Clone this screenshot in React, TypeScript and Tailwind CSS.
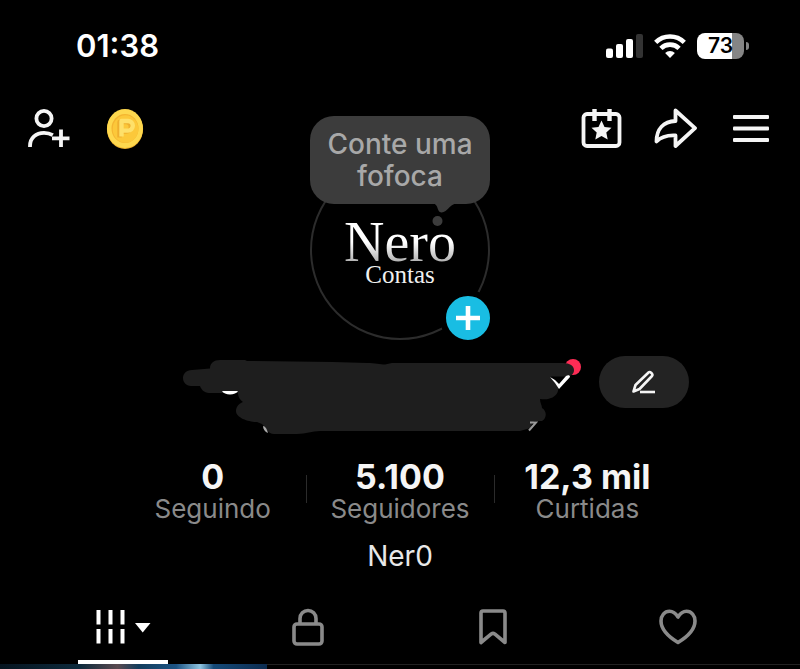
import type { ReactNode } from 'react';

const stats = [
  { value: '0', label: 'Seguindo' },
  { value: '5.100', label: 'Seguidores' },
  { value: '12,3 mil', label: 'Curtidas' },
];

function StatusBar() {
  return (
    <div className="flex items-center justify-between pt-7 pr-[51px] pl-[76px]">
      <span className="text-[31px] leading-9 font-semibold text-white">01:38</span>
      <div className="flex items-center gap-[11px]">
        <svg width="37" height="24" viewBox="0 0 37 24" fill="#fff">
          <rect x="0" y="14.5" width="7" height="9.5" rx="2" />
          <rect x="10" y="10" width="7" height="14" rx="2" />
          <rect x="20" y="5" width="7" height="19" rx="2" />
          <rect x="30" y="0" width="7" height="24" rx="2" fill="#333" />
        </svg>
        <svg width="32" height="24" viewBox="0 0 32 24" fill="none" stroke="#fff" strokeWidth="4.6">
          <path d="M1.7 8.3a20.5 20.5 0 0 1 28.6 0" />
          <path d="M6.9 14.3a13 13 0 0 1 18.2 0" />
          <path d="M16 24l-4.9-4.9a7 7 0 0 1 9.8 0z" fill="#fff" stroke="none" />
        </svg>
        <div className="flex items-center gap-0.5">
          <span className="flex h-[26px] w-[47px] items-center justify-center rounded-lg bg-linear-to-r from-white from-74% to-[#858585] to-74% text-[21px] leading-6 font-semibold text-black">
            73
          </span>
          <span className="h-2 w-[3px] rounded-r-full bg-[#858585]" />
        </div>
      </div>
    </div>
  );
}

function Coin() {
  return (
    <svg width="38" height="42" viewBox="0 0 38 42" fill="none">
      <ellipse cx="19" cy="21.5" rx="18" ry="19.5" fill="#efb02c" />
      <ellipse cx="19" cy="20.5" rx="18" ry="19.5" fill="#fed84e" />
      <ellipse cx="19" cy="20.5" rx="13.5" ry="14.5" fill="#f4b531" />
      <ellipse cx="19.5" cy="21" rx="12.8" ry="13.8" fill="#fcc83a" />
      <g strokeLinejoin="round" strokeWidth="4.4">
        <path d="M13.5 29.500V14h6.500a4.800 4.800 0 0 1 0 9.600h-6.500" stroke="#eeaf2e" />
        <path d="M15.500 28.500V13h6.500a4.800 4.800 0 0 1 0 9.600h-6.500" stroke="#fee06a" />
      </g>
    </svg>
  );
}

function Avatar() {
  return (
    <div className="relative h-56 w-[180px]">
      <div className="flex h-56 flex-col justify-end">
        <div className="flex h-[180px] flex-col items-center rounded-full border-2 border-[#2c2c2c] pt-14 font-['Liberation_Serif',serif]">
          <span className="bg-linear-to-b from-white from-50% to-[#b4b4b4] to-90% bg-clip-text text-[56px] leading-[48px] text-transparent">
            Nero
          </span>
          <span className="text-[25px] leading-[18px] text-[#f0f0f0]">Contas</span>
        </div>
      </div>
      <div className="absolute inset-x-0 top-0 rounded-[24px] bg-[#3c3c3c] px-3 py-3 text-center text-[28px] leading-8 font-medium text-[#a8a8a8]">
        Conte uma fofoca
      </div>
      <svg className="absolute top-[87px] left-[120px]" width="28" height="26" viewBox="0 0 28 26" fill="#3c3c3c">
        <path d="M2 0c5 1 5 4 6.5 7.5 1 2.5 4.5 2.5 7 .5C20 4.5 21 1.5 27 0z" />
        <circle cx="7.5" cy="18" r="5" />
      </svg>
      <button
        type="button"
        aria-label="Adicionar"
        className="absolute -right-1.5 -bottom-1.5 flex h-14 w-14 cursor-pointer items-center justify-center rounded-full border-[6px] border-black bg-[#19bde3]"
      >
        <svg width="24" height="24" viewBox="0 0 24 24" stroke="#fff" strokeWidth="4.6">
          <path d="M12 0v24M0 12h24" />
        </svg>
      </button>
    </div>
  );
}

function ProfileHeader() {
  return (
    <header className="grid grid-cols-[1fr_auto_1fr] items-start px-7 pt-[52px]">
      <div className="-mt-2 flex items-center gap-[35px]">
        <button type="button" aria-label="Adicionar amigos" className="cursor-pointer">
          <svg width="43" height="40" viewBox="1 0 43 40" fill="none" stroke="#f5f5f5" strokeWidth="3.8">
            <circle cx="17" cy="9.5" r="7.6" />
            <path d="M3 38v-1C3 29 9 23.9 17 23.9c3.5 0 6.3.8 8.8 2.300" />
            <path d="M34 20.5V38M25 29.3h17.5" />
          </svg>
        </button>
        <button type="button" aria-label="Moedas" className="cursor-pointer">
          <Coin />
        </button>
      </div>
      <Avatar />
      <div className="-mt-2 flex items-center justify-end gap-8 pr-[3px]">
        <button type="button" aria-label="Eventos" className="cursor-pointer">
          <svg width="41" height="40" viewBox="0 0 41 40" fill="none" stroke="#f5f5f5" strokeWidth="3.8">
            <rect x="2.5" y="6" width="36" height="32" rx="3.5" />
            <path d="M13.5 1v12M28.5 1v12" strokeWidth="4.4" />
            <path
              d="M20.5 12.5l3 6.500 7 .8-5.200 4.700 1.400 7-6.200-3.500-6.200 3.500 1.400-7-5.200-4.700 7-.8z"
              fill="#f5f5f5"
              stroke="none"
            />
          </svg>
        </button>
        <button type="button" aria-label="Compartilhar" className="cursor-pointer">
          <svg width="43" height="40" viewBox="0 0 43 40" fill="none" stroke="#f5f5f5" strokeWidth="3.8" strokeLinejoin="round">
            <path d="M21.5 2.5L41 20.2 21.5 38V27.5C12 27 7 29 2.5 33.5 2.5 21 9.5 13.5 21.5 13z" />
          </svg>
        </button>
        <button type="button" aria-label="Menu" className="ml-1 cursor-pointer">
          <svg width="36" height="30" viewBox="0 0 36 30" fill="#f5f5f5">
            <rect y="2" width="36" height="4" rx="1" />
            <rect y="13.5" width="36" height="4" rx="1" />
            <rect y="25" width="36" height="4" rx="1" />
          </svg>
        </button>
      </div>
    </header>
  );
}

function NameRow() {
  return (
    <div className="mt-4 flex items-start justify-center gap-[18px] pl-[71px]">
      <svg width="399" height="80" viewBox="0 0 399 80" fill="none">
        <circle cx="391" cy="11" r="8" fill="#fe2c55" />
        <path
          fill="#1e1e1e"
          d="M28 12.5C28 7 32 4 38 4h25l2 1 86 1 34 1c8 0 13 1.5 18 1.5L210 7h171c7 0 11 3 11 7 0 4-3 6.5-7 6.5h-16l-1 1 3 1.500 5 8c1 5-2 9-7 11-4 2-8 1-11 1 0 4 2 6 2 9 5 3 5 10 0 13h-8l-4 7-3 1-7 2H138c-8 0-14 3-23 3H92c-6 0-8-6-12-10l-5-2c-8 0-21-4-21-11 0-5 4-8 7-9-3-2-5-5-5-9H27c-5 0-8-4-9-7H9c-5 0-8-4-8-8s3-8 9-8z"
        />
        <path d="M368 21l5 3 4 4 7-8c2-1 4-1 4 1L377 33l-4-6z" fill="#fff" />
        <path d="M40 35h16c-2 4.500-14 4.500-16 0z" fill="#fff" />
        <path d="M81 70c2 0 4 3 5 7-3-1-5-4-5-7z" fill="#aaa" />
        <path d="M348 66.5h6l-7 8" stroke="#999" strokeWidth="2" />
      </svg>
      <button
        type="button"
        aria-label="Editar perfil"
        className="flex h-[52px] w-[90px] cursor-pointer items-center justify-center rounded-full bg-[#232323]"
      >
        <svg width="24" height="24" viewBox="0 0 24 24" fill="none" stroke="#f5f5f5" strokeWidth="2.6" strokeLinejoin="round">
          <path d="M1.5 21.5L3.5 15 16.500 2.500c1.500-1.500 5 1.500 3.500 3.500L7.500 19z" />
          <path d="M8 22h15" />
        </svg>
      </button>
    </div>
  );
}

function Stats() {
  return (
    <div className="mx-auto mt-[25px] grid max-w-[562px] grid-cols-3">
      {stats.map((s, i) => (
        <div key={s.label} className="relative text-center">
          <p className="text-[34px] leading-8 font-bold text-[#f5f5f5]">{s.value}</p>
          <p className="text-[26px] leading-8 text-[#8a8a8a]">{s.label}</p>
          {i > 0 && <span className="absolute top-[14px] left-0 h-7 w-px bg-[#2b2b2b]" />}
        </div>
      ))}
    </div>
  );
}

function Tab({ label, active = false, children }: { label: string; active?: boolean; children: ReactNode }) {
  return (
    <button
      type="button"
      role="tab"
      aria-label={label}
      aria-selected={active}
      className="relative flex h-[74px] cursor-pointer items-center justify-center"
    >
      {children}
      {active && <span className="absolute bottom-0 h-1 w-[90px] bg-white" />}
    </button>
  );
}

function Tabs() {
  return (
    <div role="tablist" className="mt-[18px] grid grid-cols-4 px-[30px]">
      <Tab label="Vídeos" active>
        <svg width="56" height="34" viewBox="0 0 56 34" fill="#fff">
          <path d="M1.500 0h4v14.500h-4zM13.500 0h4v14.500h-4zM25.500 0h4v14.500h-4zM1.500 19h4v14.500h-4zM13.500 19h4v14.500h-4zM25.500 19h4v14.500h-4z" />
          <path d="M40 13h15.500L47.700 22.500z" />
        </svg>
      </Tab>
      <Tab label="Privado">
        <svg width="32" height="38" viewBox="0 0 32 38" fill="none" stroke="#8a8a8a" strokeWidth="3.600">
          <rect x="2" y="16" width="28" height="20" rx="3" />
          <path d="M8 16v-5.500a8 8 0 0 1 16 0V16" />
        </svg>
      </Tab>
      <Tab label="Favoritos">
        <svg width="28" height="36" viewBox="0 0 28 36" fill="none" stroke="#8a8a8a" strokeWidth="3.600" strokeLinejoin="round">
          <path d="M2 4a2 2 0 0 1 2-2h20a2 2 0 0 1 2 2v29.500l-10.300-8.600a3 3 0 0 0-3.400 0L2 33.500z" />
        </svg>
      </Tab>
      <Tab label="Curtidos">
        <svg width="38" height="36" viewBox="0 0 38 36" fill="none" stroke="#8a8a8a" strokeWidth="3.600" strokeLinejoin="round">
          <path d="M19 8C16.500 4 13.500 2.300 10.500 2.300 5.500 2.300 2 6.500 2 12c0 9 8 16 17 21.500C28 28 36 21 36 12c0-5.500-3.500-9.700-8.500-9.700C24.500 2.300 21.500 4 19 8z" />
        </svg>
      </Tab>
    </div>
  );
}

export default function App() {
  return (
    <div className="min-h-screen bg-black font-['Inter',sans-serif]">
      <StatusBar />
      <ProfileHeader />
      <NameRow />
      <Stats />
      <p className="mt-[15px] text-center text-[28px] leading-8 text-[#e8e8e8]">Ner0</p>
      <Tabs />
      <div className="grid grid-cols-3 border-t border-[#222]">
        <div className="-mt-px h-1.5 bg-[linear-gradient(90deg,#06141f_0%,#0d2a3c_30%,#5a4a50_44%,#123c5c_52%,#1d5484_66%,#8fc4e0_75%,#154a78_80%,#0c2c50_100%)]" />
      </div>
    </div>
  );
}
